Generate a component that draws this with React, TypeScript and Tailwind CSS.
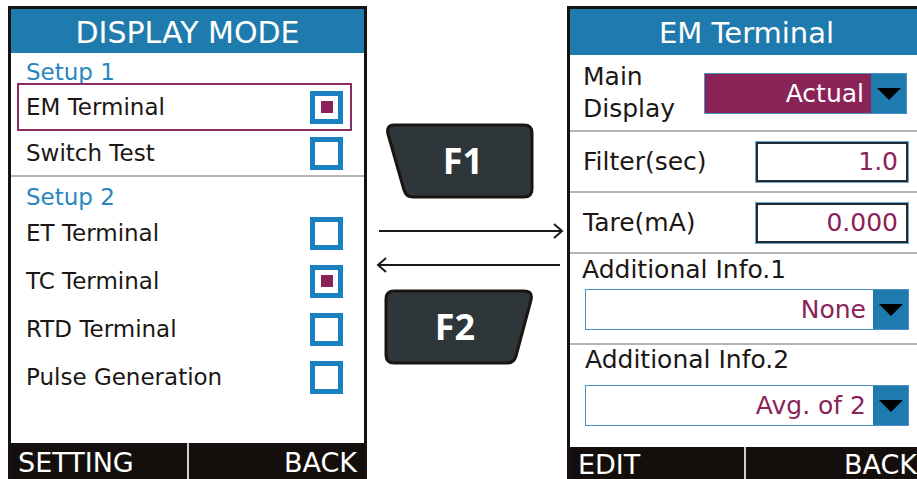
import React from 'react';

const BLUE = 'bg-[#1f7bad]';

function Checkbox({ checked }: { checked?: boolean }) {
  return (
    <div className="w-[33px] h-[33px] border-[5px] border-[#1a80c2] bg-white flex items-center justify-center shrink-0">
      {checked && <div className="w-[12px] h-[12px] bg-[#8b2358]" />}
    </div>
  );
}

function ModeRow({ label, checked, active, h = 'h-[48px]' }: { label: string; checked?: boolean; active?: boolean; h?: string }) {
  return (
    <div
      className={`${h} ml-[6px] mr-[12px] px-[7px] border-2 flex items-center justify-between ${
        active ? 'border-[#8b2a5e]' : 'border-transparent'
      }`}
    >
      <span className="text-[23px] text-[#1c1714]">{label}</span>
      <Checkbox checked={checked} />
    </div>
  );
}

function Triangle() {
  return (
    <svg width="24" height="12" viewBox="0 0 24 12">
      <path d="M0 0 L24 0 L12 12 Z" fill="#000" />
    </svg>
  );
}

function Dropdown({ value, filled, className }: { value: string; filled?: boolean; className?: string }) {
  return (
    <div className={`flex h-[41px] border border-[#4a92c4] ${className ?? ''}`}>
      <div
        className={`flex-1 flex items-center justify-end pr-[7px] text-[25px] ${
          filled ? 'bg-[#8a2357] text-white' : 'bg-white text-[#8a2357]'
        }`}
      >
        {value}
      </div>
      <div className={`w-[35px] ${BLUE} flex items-center justify-center`}>
        <Triangle />
      </div>
    </div>
  );
}

function NumberBox({ value }: { value: string }) {
  return (
    <div className="w-[152px] h-[40px] border-2 border-[#1f2a33] outline outline-1 outline-[#6aa6d0] bg-white flex items-center justify-end pr-[8px] text-[25px] text-[#8a2357]">
      {value}
    </div>
  );
}

function FKey({ label, slant }: { label: string; slant: 'left' | 'right' }) {
  const d =
    slant === 'left'
      ? 'M11 3 L141 3 Q149 3 149 11 L149 67 Q149 75 141 75 L30 75 Q23 75 21 68 L5 12 Q3 3 11 3 Z'
      : 'M11 3 L141 3 Q150 3 148 12 L133 68 Q131 75 124 75 L11 75 Q3 75 3 67 L3 11 Q3 3 11 3 Z';
  return (
    <div className={`relative w-[152px] h-[78px] ml-[16px] flex items-center justify-center ${slant === 'left' ? 'pl-[8px]' : 'pr-[8px]'}`}>
      <svg className="absolute inset-0" width="152" height="78" viewBox="0 0 152 78">
        <path d={d} fill="#2f3639" stroke="#1a1512" strokeWidth="3" strokeLinejoin="round" />
      </svg>
      <span className="relative text-white font-bold text-[36px] font-['Open_Sans',sans-serif]">{label}</span>
    </div>
  );
}

function Arrow({ dir }: { dir: 'right' | 'left' }) {
  return (
    <svg width="200" height="16" viewBox="0 0 200 16" className="block">
      {dir === 'right' ? (
        <>
          <line x1="12" y1="8" x2="195" y2="8" stroke="#1a1a1a" strokeWidth="2" />
          <path d="M187 1 L195 8 L187 15" fill="none" stroke="#1a1a1a" strokeWidth="2" />
        </>
      ) : (
        <>
          <line x1="11" y1="8" x2="193" y2="8" stroke="#1a1a1a" strokeWidth="2" />
          <path d="M19 1 L11 8 L19 15" fill="none" stroke="#1a1a1a" strokeWidth="2" />
        </>
      )}
    </svg>
  );
}

export default function App() {
  return (
    <div className="w-[917px] h-[479px] overflow-hidden bg-white flex items-start font-['DejaVu_Sans',sans-serif]">
      {/* Display mode screen */}
      <div className="w-[359px] h-[476px] mt-[6px] ml-[8px] border-[3px] border-[#17120f] bg-white flex flex-col shrink-0">
        <div className={`h-[44px] ${BLUE} text-white text-[30px] flex items-center justify-center pt-[2px]`}>DISPLAY MODE</div>
        <div className="h-[30px] pt-[8px] ml-[6px] mr-[12px] px-[9px] flex items-center text-[23px] text-[#2a86c0]">Setup 1</div>
        <ModeRow label="EM Terminal" checked active />
        <ModeRow label="Switch Test" h="h-[44px]" />
        <div className="h-[2px] bg-[#b4b4b4]" />
        <div className="h-[32px] pt-[8px] ml-[6px] mr-[12px] px-[9px] flex items-center text-[23px] text-[#2a86c0]">Setup 2</div>
        <ModeRow label="ET Terminal" />
        <ModeRow label="TC Terminal" checked />
        <ModeRow label="RTD Terminal" />
        <ModeRow label="Pulse Generation" />
        <div className="flex-1" />
        <div className="h-[36px] bg-[#140f0c] flex text-white text-[27px] leading-none">
          <div className="w-[176px] flex items-center pl-[7px] pt-[2px]">SETTING</div>
          <div className="w-[2px] bg-[#cfcfcf]" />
          <div className="flex-1 flex items-center justify-end pr-[7px] pt-[2px]">BACK</div>
        </div>
      </div>

      {/* Function keys */}
      <div className="w-[200px] flex flex-col shrink-0">
        <div className="mt-[122px]">
          <FKey label="F1" slant="left" />
        </div>
        <div className="mt-[23px]">
          <Arrow dir="right" />
        </div>
        <div className="mt-[18px]">
          <Arrow dir="left" />
        </div>
        <div className="mt-[15px]">
          <FKey label="F2" slant="right" />
        </div>
      </div>

      {/* EM terminal screen */}
      <div className="w-[359px] h-[476px] mt-[6px] border-[3px] border-[#17120f] bg-white flex flex-col shrink-0">
        <div className={`h-[46px] ${BLUE} text-white text-[29px] flex items-center justify-center pt-[4px]`}>EM Terminal</div>
        <div className="h-[75px] flex items-center text-[25px] text-[#1c1714]">
          <div className="w-[134px] pl-[13px] leading-[32px]">
            Main
            <br />
            Display
          </div>
          <Dropdown value="Actual" filled className="w-[203px] mt-[2px]" />
        </div>
        <div className="h-[2px] bg-[#b4b4b4]" />
        <div className="h-[59px] flex items-center text-[25px] text-[#1c1714]">
          <div className="w-[186px] pl-[13px]">Filter(sec)</div>
          <NumberBox value="1.0" />
        </div>
        <div className="h-[2px] bg-[#b4b4b4]" />
        <div className="h-[59px] flex items-center text-[25px] text-[#1c1714]">
          <div className="w-[186px] pl-[13px]">Tare(mA)</div>
          <NumberBox value="0.000" />
        </div>
        <div className="h-[2px] bg-[#b4b4b4]" />
        <div className="h-[89px] flex flex-col">
          <div className="pt-[3px] pl-[12px] leading-[26px] text-[25px] text-[#1c1714]">Additional Info.1</div>
          <Dropdown value="None" className="mt-[6px] ml-[15px] w-[324px]" />
        </div>
        <div className="h-[2px] bg-[#b4b4b4]" />
        <div className="h-[102px] flex flex-col">
          <div className="pt-[2px] pl-[15px] leading-[26px] text-[25px] text-[#1c1714]">Additional Info.2</div>
          <Dropdown value="Avg. of 2" className="mt-[12px] ml-[15px] w-[324px]" />
        </div>
        <div className="flex-1" />
        <div className="h-[32px] bg-[#140f0c] flex text-white text-[27px] leading-none">
          <div className="w-[174px] flex items-center pl-[8px] pt-[2px]">EDIT</div>
          <div className="w-[2px] bg-[#cfcfcf]" />
          <div className="flex-1 flex items-center justify-end pr-[6px] pt-[2px]">BACK</div>
        </div>
      </div>
    </div>
  );
}
